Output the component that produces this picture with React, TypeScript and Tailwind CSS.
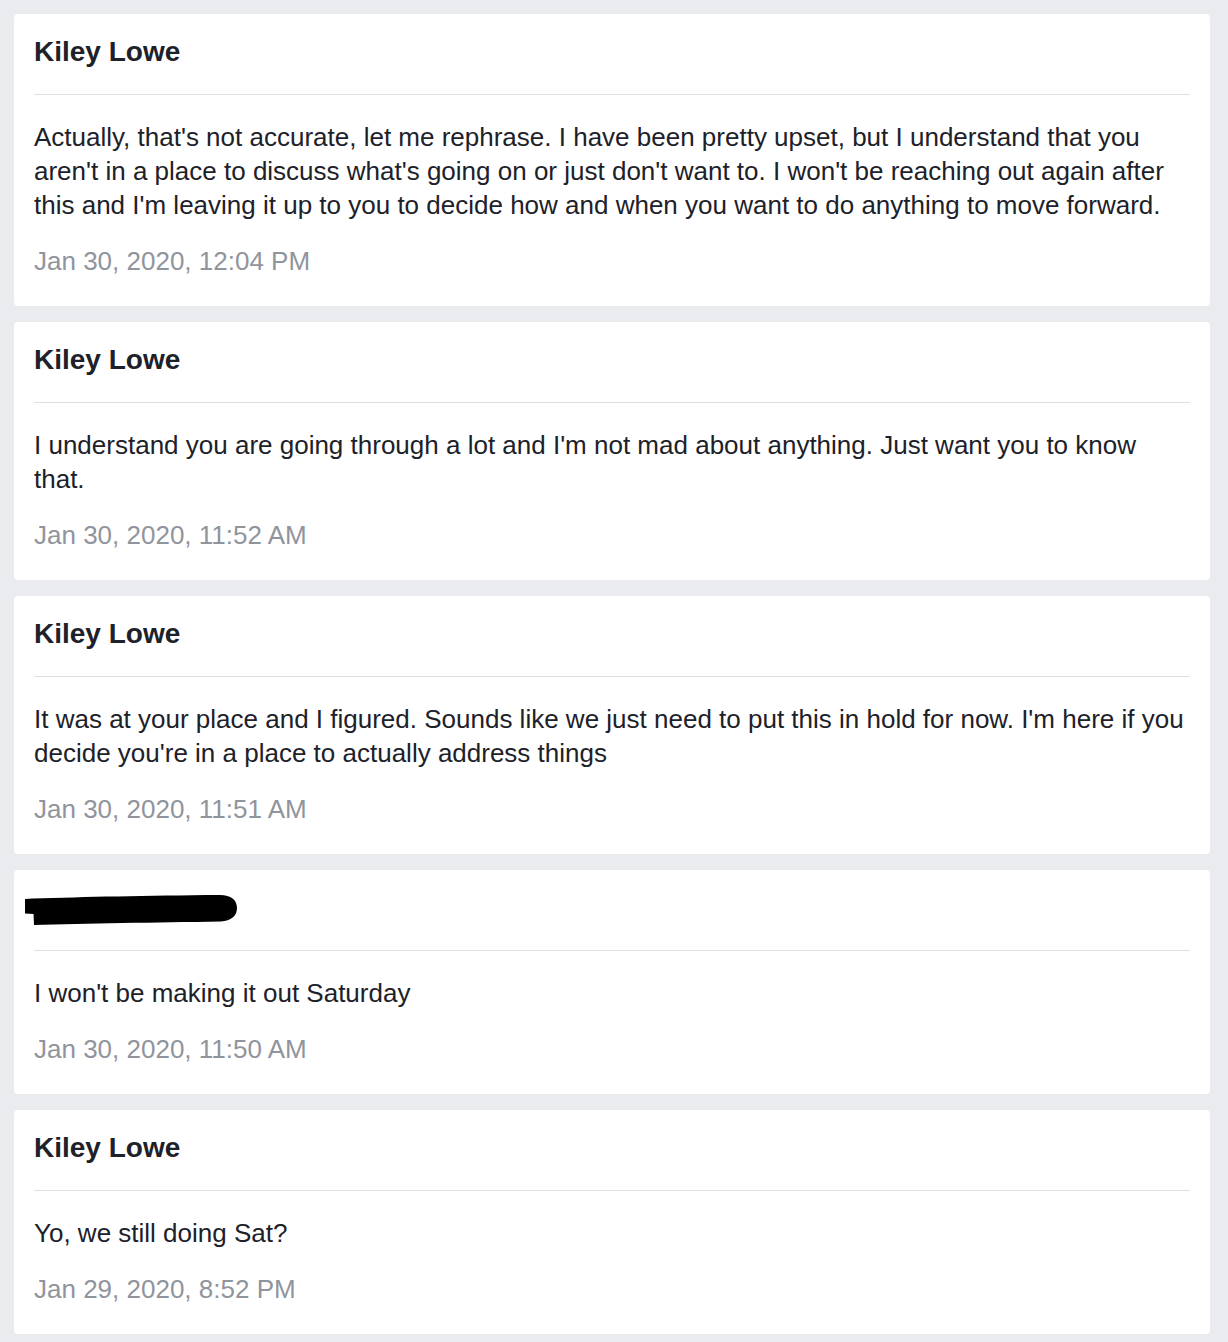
import React from 'react';

type Message = {
  author: string | null;
  body: string;
  time: string;
};

const messages: Message[] = [
  {
    author: 'Kiley Lowe',
    body: "Actually, that's not accurate, let me rephrase. I have been pretty upset, but I understand that you aren't in a place to discuss what's going on or just don't want to. I won't be reaching out again after this and I'm leaving it up to you to decide how and when you want to do anything to move forward.",
    time: 'Jan 30, 2020, 12:04 PM',
  },
  {
    author: 'Kiley Lowe',
    body: "I understand you are going through a lot and I'm not mad about anything. Just want you to know that.",
    time: 'Jan 30, 2020, 11:52 AM',
  },
  {
    author: 'Kiley Lowe',
    body: "It was at your place and I figured. Sounds like we just need to put this in hold for now. I'm here if you decide you're in a place to actually address things",
    time: 'Jan 30, 2020, 11:51 AM',
  },
  {
    author: null,
    body: "I won't be making it out Saturday",
    time: 'Jan 30, 2020, 11:50 AM',
  },
  {
    author: 'Kiley Lowe',
    body: 'Yo, we still doing Sat?',
    time: 'Jan 29, 2020, 8:52 PM',
  },
];

// black marker scribble over the hidden name
function Redacted() {
  return (
    <div className="pt-[4px]">
      <svg width="214" height="30" viewBox="0 0 214 30" className="-ml-[9px] block">
        <path
          d="M0 4 L8 3.5 C60 2 120 0.5 195 0 C206 0 212 5 212 13 C212 21 206 26 196 26.5 C130 27.5 60 28.5 9 30 L8.5 19 L0 18.5 Z"
          fill="#000"
        />
      </svg>
    </div>
  );
}

export default function App() {
  return (
    <div className="min-h-screen bg-[#e9ebee] pl-[14px] pr-[18px] pt-[14px] pb-[9px] font-['Liberation_Sans',Arial,sans-serif]">
      <div className="flex flex-col gap-[16px]">
        {messages.map((m, i) => (
          <div key={i} className="rounded-[4px] bg-white px-[20px] pt-[21px] pb-[28px]">
            <div className="h-[34px] text-[28px] font-bold leading-[34px] text-[#1d2129]">
              {m.author ? m.author : <Redacted />}
            </div>
            <div className="mt-[25px] border-t border-[#dddfe2]" />
            <p className="mt-[25px] text-[26px] leading-[34px] text-[#1d2129]">{m.body}</p>
            <div className="mt-[22px] text-[26px] leading-[34px] text-[#90949c]">{m.time}</div>
          </div>
        ))}
      </div>
    </div>
  );
}
